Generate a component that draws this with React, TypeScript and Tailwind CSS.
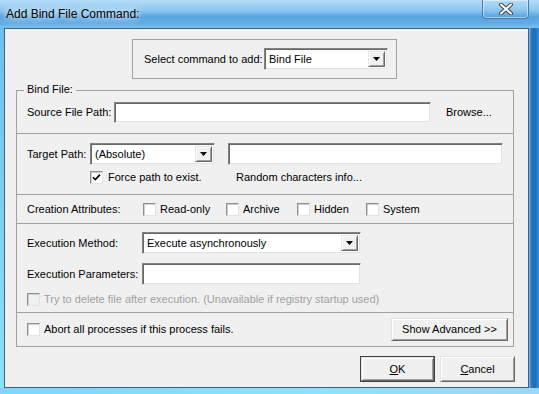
const sunken =
  "bg-white border border-t-[#828282] border-l-[#828282] border-b-[#f0f0f0] border-r-[#f0f0f0] shadow-[inset_1px_1px_0_#696969,inset_-1px_-1px_0_#e3e3e3]";
const raised =
  "bg-[#f0f0f0] border border-t-[#e3e3e3] border-l-[#e3e3e3] border-b-[#696969] border-r-[#696969] shadow-[inset_1px_1px_0_#ffffff,inset_-1px_-1px_0_#a0a0a0]";

function Select({ value, width }: { value: string; width: string }) {
  return (
    <div className={`${sunken} ${width} h-[22px] flex items-center p-[2px]`}>
      <span className="flex-1 pl-[2px] truncate">{value}</span>
      <span className={`${raised} w-[17px] h-full flex items-center justify-center`}>
        <svg width="7" height="4" viewBox="0 0 7 4">
          <path d="M0 0h7L3.5 4z" fill="#000" />
        </svg>
      </span>
    </div>
  );
}

function Check({ checked, disabled }: { checked?: boolean; disabled?: boolean }) {
  return (
    <span
      className={`w-[13px] h-[13px] shrink-0 flex items-center justify-center border border-t-[#8e8f8f] border-l-[#8e8f8f] border-b-[#e3e3e3] border-r-[#e3e3e3] shadow-[inset_1px_1px_0_#d0d0d0] ${
        disabled ? "bg-[#f0f0f0]" : "bg-white"
      }`}
    >
      {checked && (
        <svg width="9" height="9" viewBox="0 0 9 9">
          <path d="M1 4.2 L3.3 6.6 L8 1.6" stroke="#000" strokeWidth="1.6" fill="none" />
        </svg>
      )}
    </span>
  );
}

export default function App() {
  return (
    <div className="w-[539px] h-[394px] flex flex-col overflow-hidden bg-[#5ba6e0] font-['Liberation_Sans',Arial,sans-serif] text-[11px] text-black">
      {/* title bar */}
      <div className="h-[28px] shrink-0 flex items-start bg-[linear-gradient(180deg,#b4dcf8_0%,#8ec8f0_35%,#5aa3de_60%,#62ade6_85%,#7cc2ef_100%)]">
        <span className="ml-[6px] mt-[6px] text-[12px] leading-[16px] [text-shadow:0_0_6px_#ffffff,0_0_10px_#ffffff]">
          Add Bind File Command:
        </span>
        <div className="ml-auto mr-[10px] w-[47px] h-[19px] rounded-b-[4px] border border-t-0 border-[#4e7aa6] shadow-[inset_0_0_0_1px_rgba(255,255,255,0.45)] flex items-center justify-center">
          <svg width="14" height="12" viewBox="0 0 14 12">
            <path d="M2 1.5 L12 10.5 M12 1.5 L2 10.5" stroke="#3a4654" strokeWidth="4" strokeLinecap="round" />
            <path d="M2 1.5 L12 10.5 M12 1.5 L2 10.5" stroke="#ffffff" strokeWidth="2" strokeLinecap="round" />
          </svg>
        </div>
      </div>

      <div className="flex flex-1 min-h-0">
        <div className="w-[4px] bg-[linear-gradient(180deg,#6cc0ee,#8fe0f8)]" />
        {/* client */}
        <div className="w-[525px] h-[360px] border border-[#3e5f80] bg-[#f0f0f0] flex flex-col items-start">
          <div className="ml-[127px] mt-[10px] w-[265px] h-[40px] border border-[#a0a0a0] flex items-center pl-[11px]">
            <span className="w-[120px]">Select command to add:</span>
            <Select value="Bind File" width="w-[124px]" />
          </div>

          <div className="ml-[11px] mt-[11px] w-[498px] flex flex-col">
            {/* Bind File group */}
            <div className="relative h-[44px] border border-[#a0a0a0] flex items-start pl-[10px] pt-[11px]">
              <span className="absolute left-[7px] -top-[8px] px-[3px] bg-[#f0f0f0] leading-[13px]">Bind File:</span>
              <div className="flex items-center h-[21px]">
                <span className="w-[87px]">Source File Path:</span>
                <div className={`${sunken} w-[317px] h-[21px]`} />
                <span className="ml-[15px]">Browse...</span>
              </div>
            </div>

            {/* target */}
            <div className="h-[61px] border-x border-b border-[#a0a0a0] pl-[10px] pt-[9px]">
              <div className="flex items-center h-[22px]">
                <span className="w-[63px]">Target Path:</span>
                <Select value="(Absolute)" width="w-[125px]" />
                <div className={`${sunken} ml-[13px] w-[275px] h-[22px]`} />
              </div>
              <div className="flex items-center h-[13px] mt-[6px] pl-[63px]">
                <div className="w-[146px] flex items-center gap-[5px]">
                  <Check checked />
                  <span>Force path to exist.</span>
                </div>
                <span>Random characters info...</span>
              </div>
            </div>

            {/* attributes */}
            <div className="h-[29px] border-x border-b border-[#a0a0a0] pl-[10px] flex items-center">
              <span className="w-[116px]">Creation Attributes:</span>
              <div className="w-[83px] flex items-center gap-[4px]">
                <Check />
                <span>Read-only</span>
              </div>
              <div className="w-[71px] flex items-center gap-[4px]">
                <Check />
                <span>Archive</span>
              </div>
              <div className="w-[69px] flex items-center gap-[4px]">
                <Check />
                <span>Hidden</span>
              </div>
              <div className="flex items-center gap-[4px]">
                <Check />
                <span>System</span>
              </div>
            </div>

            {/* execution */}
            <div className="h-[89px] border-x border-b border-[#a0a0a0] pl-[10px] pt-[8px]">
              <div className="flex items-center h-[22px]">
                <span className="w-[115px]">Execution Method:</span>
                <Select value="Execute asynchronously" width="w-[219px]" />
              </div>
              <div className="flex items-center h-[22px] mt-[9px]">
                <span className="w-[115px]">Execution Parameters:</span>
                <div className={`${sunken} w-[219px] h-[22px]`} />
              </div>
              <div className="flex items-center gap-[4px] h-[13px] mt-[8px] text-[#a0a0a0]">
                <Check disabled />
                <span>Try to delete file after execution. (Unavailable if registry startup used)</span>
              </div>
            </div>

            {/* abort */}
            <div className="h-[34px] border-x border-b border-[#a0a0a0] pl-[10px] pr-[5px] flex items-center">
              <Check />
              <span className="ml-[4px]">Abort all processes if this process fails.</span>
              <button className={`${raised} ml-auto w-[117px] h-[23px]`}>Show Advanced &gt;&gt;</button>
            </div>
          </div>

          <div className="self-end mr-[13px] mt-[9px] flex gap-[5px]">
            <button className="w-[75px] h-[26px] border border-[#404040] p-0">
              <span className={`${raised} w-full h-full flex items-center justify-center`}>
                <span>
                  <span className="underline">O</span>K
                </span>
              </span>
            </button>
            <button className={`${raised} w-[75px] h-[26px]`}>
              <span className="underline">C</span>ancel
            </button>
          </div>
        </div>
        <div className="flex-1 bg-[linear-gradient(90deg,#8cc8ee_0px,#2a7cc8_2px,#1d6bbd_6px,#3f90d6_10px)]" />
      </div>
      <div className="h-[6px] shrink-0 bg-[linear-gradient(90deg,#7fd6f6,#8ee2fa_60%,#9fd6f2)]" />
    </div>
  );
}
